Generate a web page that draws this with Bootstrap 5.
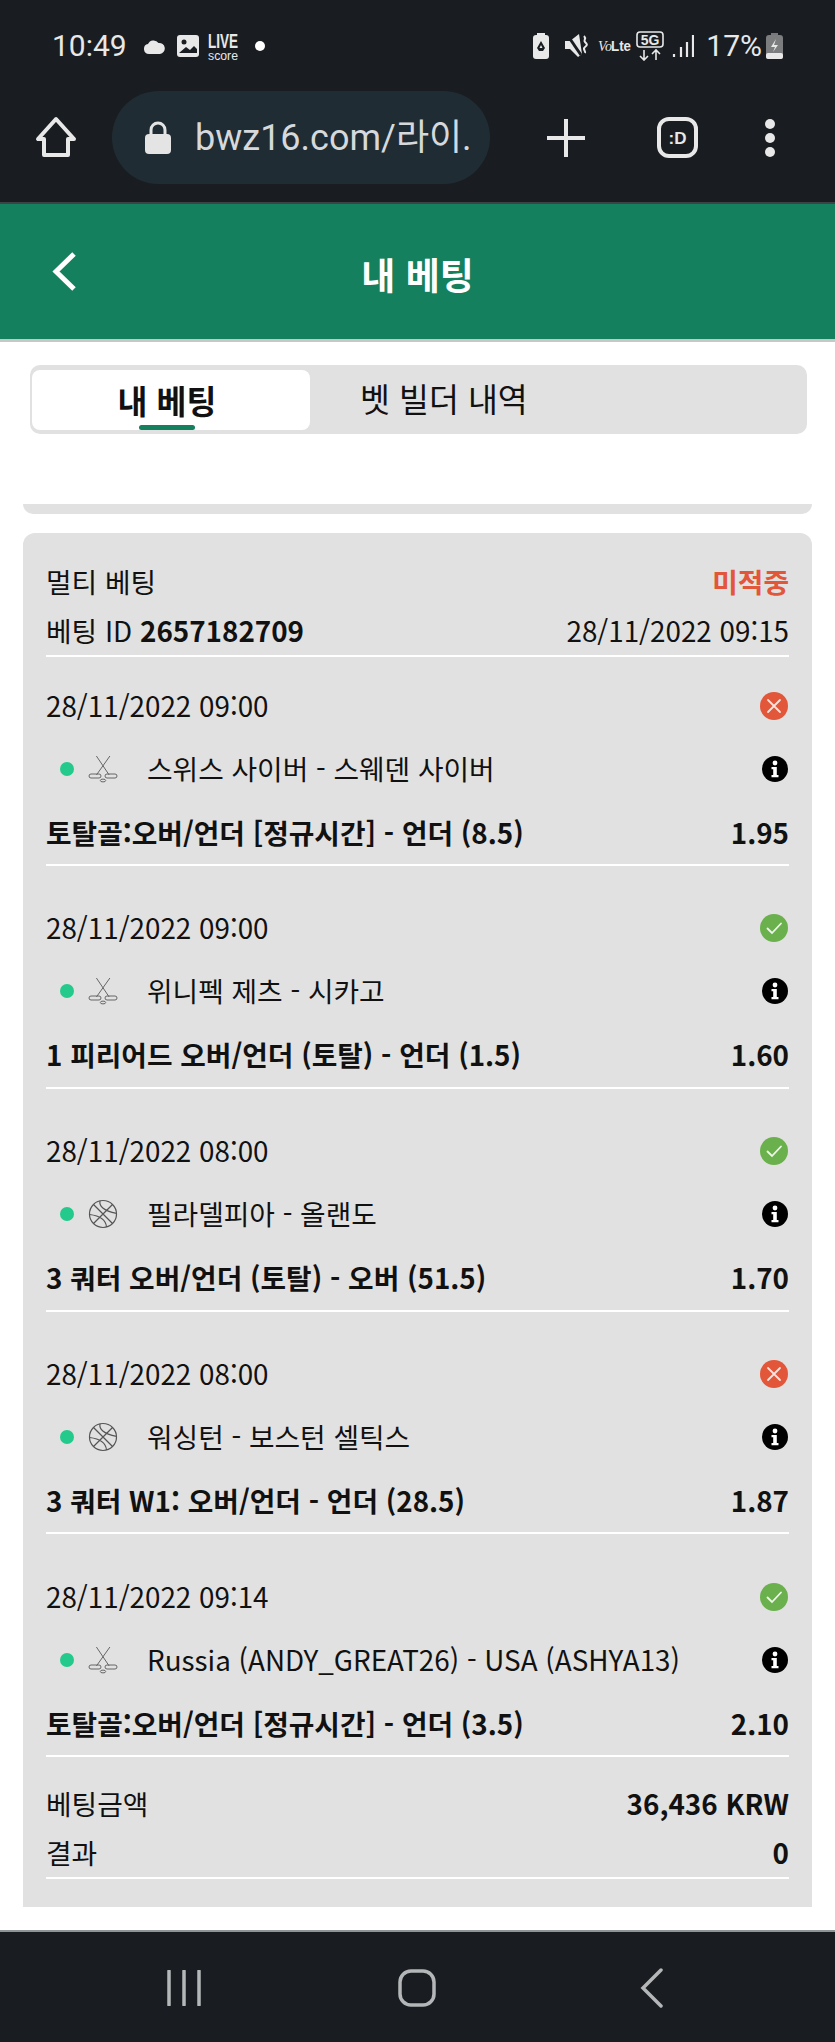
<!DOCTYPE html>
<html lang="ko">
<head>
    <meta charset="UTF-8">
    <title>내 베팅</title>
    <meta name="viewport" content="width=device-width, initial-scale=1">
    <link href="https://cdn.jsdelivr.net/npm/bootstrap@5.3.0/dist/css/bootstrap.min.css" rel="stylesheet">
    <style>
        body {
            width: 835px;
            height: 2042px;
            overflow: hidden;
            background: #fff;
            color: #111;
            font-family: "Noto Sans CJK KR", "Noto Sans", sans-serif;
            font-size: 27.800px;
        }

        .phone-top {
            height: 204px;
            background: #191d21;
            border-bottom: 2px solid #3c4246;
        }

        .status-row {
            height: 91px;
            padding: 0 52px;
            color: #e8e8e8;
            font-family: Roboto, "Liberation Sans", sans-serif;
            font-size: 30px;
        }

        .browser-row {
            height: 93px;
        }

        .url-pill {
            width: 378px;
            height: 93px;
            padding-left: 33px;
            margin-left: 112px;
            margin-right: 57px;
            background: #202c33;
            border-radius: 47px;
            color: #d6d9db;
            font-family: Roboto, "Noto Sans CJK KR", sans-serif;
            font-size: 36px;
            white-space: nowrap;
            overflow: hidden;
        }

        .app-header {
            height: 138px;
            padding-top: 6px;
            background: #15805d;
            border-bottom: 3px solid #c6c8c7;
            color: #fff;
            font-size: 37px;
            font-weight: 700;
        }

        .app-header svg {
            left: 50px;
            top: 46px;
        }

        .tab-track {
            height: 69px;
            margin: 23px 28px 0 30px;
            padding: 5px 2px 4px;
            background: #e1e1e1;
            border-radius: 10px;
            font-size: 32.500px;
        }

        .tab-on {
            width: 278px;
            padding-right: 8px;
            background: #fff;
            border-radius: 8px;
            font-weight: 700;
        }

        .tab-on::after {
            content: "";
            position: absolute;
            left: 107px;
            bottom: 0;
            width: 56px;
            height: 5px;
            background: #15805d;
            border-radius: 3px;
        }

        .tab-off {
            padding-left: 50px;
        }

        .prev-card {
            height: 10px;
            margin: 70px 23px 0;
            background: #e1e1e1;
            border-radius: 0 0 10px 10px;
        }

        .bet-card {
            margin: 19px 23px 0;
            padding: 24px 23px 28px;
            background: #e1e1e1;
            border-radius: 12px 12px 0 0;
        }

        .bet-line {
            height: 49px;
        }

        .bet-line.rule-under {
            height: 51px;
        }

        .rule-under {
            border-bottom: 2px solid #fff;
        }

        .lost-text {
            color: #e2563a;
            font-weight: 700;
        }

        .leg-block {
            padding-top: 17px;
        }

        .leg-block + .leg-block {
            margin-top: 13.750px;
        }

        .leg-date {
            height: 64px;
            padding-bottom: 1px;
        }

        .leg-match,
        .leg-market {
            height: 63px;
        }

        .leg-match {
            padding-bottom: 2px;
        }

        .leg-market {
            font-weight: 700;
        }

        .state-icon {
            margin-right: 1px;
        }

        .live-dot {
            width: 14px;
            height: 14px;
            margin: 0 14px;
            background: #24c98c;
            border-radius: 50%;
        }

        .sport-icon {
            margin-right: 29px;
        }

        .bet-totals {
            margin-top: 22px;
        }

        .phone-bottom {
            height: 112px;
            margin-top: 23px;
            background: #191d21;
            border-top: 2px solid #8f9496;
        }
    </style>
</head>
<body>
    <!-- shared icons -->
    <svg width="0" height="0" class="d-block">
        <symbol id="ic-lost" viewBox="0 0 28 28">
            <circle cx="14" cy="14" r="14" fill="#e2563a"/>
            <path d="M8 8l12 12M20 8L8 20" stroke="#f6e3dd" stroke-width="1.800" stroke-linecap="round"/>
        </symbol>
        <symbol id="ic-won" viewBox="0 0 28 28">
            <circle cx="14" cy="14" r="14" fill="#6ab04c"/>
            <path d="M7.500 14.500l4.500 4.500 9-9.500" fill="none" stroke="#eef6e9" stroke-width="1.800" stroke-linecap="round"/>
        </symbol>
        <symbol id="ic-info" viewBox="0 0 26 26">
            <circle cx="13" cy="13" r="13" fill="#000"/>
            <circle cx="13" cy="7" r="2.400" fill="#fff"/>
            <path d="M9.500 11h5.300v8h1.700v2.200h-7V19h1.700v-5.800H9.500z" fill="#fff"/>
        </symbol>
        <symbol id="ic-hockey" viewBox="0 0 30 30">
            <g fill="none" stroke="#666" stroke-width="1">
                <path d="M8.400 2L21.200 21M21.900 2L8.400 21"/>
                <rect x="1" y="20" width="12" height="4" rx="2"/>
                <rect x="17" y="20" width="12" height="4" rx="2"/>
                <ellipse cx="15" cy="26.500" rx="2.700" ry="1.400"/>
            </g>
        </symbol>
        <symbol id="ic-ball" viewBox="0 0 30 30">
            <g fill="none" stroke="#555" stroke-width="1.200">
                <circle cx="15" cy="15" r="13.500"/>
                <path d="M5.500 5.500l19 19M24.500 5.500l-19 19M12 1.800c-1 5 3 10 16.500 12.500M1.600 15.500C14 17 18 22 18.500 28"/>
            </g>
        </symbol>
    </svg>

    <div class="phone-top">
        <div class="status-row d-flex align-items-center">
            <span>10:49</span>
            <svg class="ms-3" width="22" height="16" viewBox="0 0 22 16"><path d="M6 16a5 5 0 0 1-1-9.900A6 6 0 0 1 15.500 5 5.500 5.500 0 0 1 17 16z" fill="#e8e8e8"/></svg>
            <svg class="ms-2" width="26" height="22" viewBox="0 0 26 22"><rect x="4" y="0" width="22" height="22" rx="3" fill="#e8e8e8"/><circle cx="11" cy="7" r="2.500" fill="#191d21"/><path d="M6 18l7-6 4 3 4-4 3 3v4H6z" fill="#191d21"/></svg>
            <svg class="ms-2" width="32" height="36" viewBox="0 0 32 36">
                <text x="1" y="12.500" transform="scale(1 1.600)" textLength="30" lengthAdjust="spacingAndGlyphs" font-family="Liberation Sans" font-size="12.500" font-weight="700" fill="#e8e8e8">LIVE</text>
                <text x="1" y="32" textLength="30" lengthAdjust="spacingAndGlyphs" font-family="Liberation Sans" font-size="12" fill="#e8e8e8">score</text>
            </svg>
            <span class="rounded-circle bg-white ms-3" style="width:10px;height:10px"></span>
            <div class="ms-auto d-flex align-items-center">
                <svg width="16" height="26" viewBox="0 0 16 26"><rect x="4" y="0" width="8" height="3" fill="#e8e8e8"/><rect x="0" y="2" width="16" height="24" rx="3" fill="#e8e8e8"/><path d="M8 8l4 7-2 3H6l-2-3zM8 12l-1.500 3h3z" fill="#191d21" fill-rule="evenodd"/></svg>
                <svg class="ms-3" width="25" height="25" viewBox="0 0 25 25"><path d="M0 8h5l9-7 3 20-4 3-8-8H0z" fill="#e8e8e8"/><path d="M3 3l13 19" stroke="#191d21" stroke-width="3"/><path d="M19 3c3 3-1 4 1 6s3 3 0 5 1 4 0 6" fill="none" stroke="#e8e8e8" stroke-width="2"/></svg>
                <svg class="ms-2" width="34" height="18" viewBox="0 0 34 18"><text x="0" y="14" font-family="Liberation Serif" font-size="14" font-style="italic" fill="#e8e8e8">Vo</text><text x="13" y="14" textLength="20" lengthAdjust="spacingAndGlyphs" font-family="Liberation Sans" font-size="14" font-weight="700" fill="#e8e8e8">Lte</text></svg>
                <svg class="ms-1" width="28" height="30" viewBox="0 0 28 30"><rect x="1" y="1" width="26" height="15" rx="3" fill="none" stroke="#e8e8e8" stroke-width="1.600"/><text x="14" y="14" text-anchor="middle" font-family="Liberation Sans" font-size="14" font-weight="700" fill="#e8e8e8">5G</text><path d="M8 19v10M4 25l4 4 4-4M20 29V19M16 23l4-4 4 4" fill="none" stroke="#e8e8e8" stroke-width="1.600"/></svg>
                <svg class="ms-2" width="22" height="24" viewBox="0 0 22 24"><path d="M2 20v3M9 13v10M15 8v15M21 1v22" stroke="#e8e8e8" stroke-width="2.200"/></svg>
                <span class="ms-2 ps-1 lh-1">17%</span>
                <svg class="ms-1" width="17" height="26" viewBox="0 0 17 26"><rect x="5" y="0" width="7" height="3" fill="#777"/><rect x="0" y="2" width="17" height="24" rx="3" fill="#7b7d7e"/><rect x="0" y="20" width="17" height="6" rx="2" fill="#e8e8e8"/><path d="M10 6l-5 8h4l-2 5 5-7H8z" fill="#e8e8e8"/></svg>
            </div>
        </div>
        <div class="browser-row d-flex align-items-center position-relative">
            <svg class="position-absolute" style="left:35px;top:25px" width="42" height="42" viewBox="0 0 42 42"><path d="M21 3L3 23h6v16h24V23h6z" fill="none" stroke="#e8e8e8" stroke-width="4" stroke-linejoin="round"/></svg>
            <div class="url-pill d-flex align-items-center">
                <svg class="flex-shrink-0 me-4" width="26" height="33" viewBox="0 0 26 33"><path d="M6 14V9a7 7 0 0 1 14 0v5" fill="none" stroke="#e4e4e4" stroke-width="3"/><rect x="0" y="13" width="26" height="20" rx="4" fill="#e4e4e4"/></svg>
                <span>bwz16.com/라이.</span>
            </div>
            <svg width="38" height="38" viewBox="0 0 38 38"><path d="M19 0v38M0 19h38" stroke="#e8e8e8" stroke-width="4" stroke-linecap="round"/></svg>
            <svg style="margin-left:72px" width="41" height="41" viewBox="0 0 41 41"><rect x="2" y="2" width="37" height="37" rx="10" fill="none" stroke="#e8e8e8" stroke-width="4"/><text x="20.500" y="27" text-anchor="middle" font-family="Liberation Sans" font-size="17" font-weight="700" fill="#e8e8e8">:D</text></svg>
            <svg style="margin-left:67px" width="10" height="38" viewBox="0 0 10 38"><circle cx="5" cy="5" r="5" fill="#e8e8e8"/><circle cx="5" cy="19" r="5" fill="#e8e8e8"/><circle cx="5" cy="33" r="5" fill="#e8e8e8"/></svg>
        </div>
    </div>

    <div class="app-header position-relative d-flex align-items-center justify-content-center">
        <svg class="position-absolute" width="28" height="44" viewBox="0 0 28 44"><path d="M24 4L6 21.500 24 39" fill="none" stroke="#fff" stroke-width="5"/></svg>
        <span>내 베팅</span>
    </div>

    <div class="tab-track d-flex">
        <div class="tab-on position-relative d-flex align-items-center justify-content-center">내 베팅</div>
        <div class="tab-off d-flex align-items-center pb-1">벳 빌더 내역</div>
    </div>

    <div class="prev-card"></div>

    <div class="bet-card">
        <div class="bet-line d-flex justify-content-between align-items-center">
            <span>멀티 베팅</span>
            <span class="lost-text">미적중</span>
        </div>
        <div class="bet-line rule-under d-flex justify-content-between align-items-center">
            <span>베팅 ID <b>2657182709</b></span>
            <span>28/11/2022 09:15</span>
        </div>

        <div class="leg-block rule-under">
            <div class="leg-date d-flex justify-content-between align-items-center">
                <span>28/11/2022 09:00</span>
                <svg class="state-icon" width="28" height="28"><use href="#ic-lost"/></svg>
            </div>
            <div class="leg-match d-flex align-items-center">
                <span class="live-dot"></span>
                <svg class="sport-icon" width="30" height="30"><use href="#ic-hockey"/></svg>
                <span>스위스 사이버 - 스웨덴 사이버</span>
                <svg class="state-icon ms-auto" width="26" height="26"><use href="#ic-info"/></svg>
            </div>
            <div class="leg-market d-flex justify-content-between align-items-center">
                <span>토탈골:오버/언더 [정규시간] - 언더 (8.5)</span>
                <span>1.95</span>
            </div>
        </div>

        <div class="leg-block rule-under">
            <div class="leg-date d-flex justify-content-between align-items-center">
                <span>28/11/2022 09:00</span>
                <svg class="state-icon" width="28" height="28"><use href="#ic-won"/></svg>
            </div>
            <div class="leg-match d-flex align-items-center">
                <span class="live-dot"></span>
                <svg class="sport-icon" width="30" height="30"><use href="#ic-hockey"/></svg>
                <span>위니펙 제츠 - 시카고</span>
                <svg class="state-icon ms-auto" width="26" height="26"><use href="#ic-info"/></svg>
            </div>
            <div class="leg-market d-flex justify-content-between align-items-center">
                <span>1 피리어드 오버/언더 (토탈) - 언더 (1.5)</span>
                <span>1.60</span>
            </div>
        </div>

        <div class="leg-block rule-under">
            <div class="leg-date d-flex justify-content-between align-items-center">
                <span>28/11/2022 08:00</span>
                <svg class="state-icon" width="28" height="28"><use href="#ic-won"/></svg>
            </div>
            <div class="leg-match d-flex align-items-center">
                <span class="live-dot"></span>
                <svg class="sport-icon" width="30" height="30"><use href="#ic-ball"/></svg>
                <span>필라델피아 - 올랜도</span>
                <svg class="state-icon ms-auto" width="26" height="26"><use href="#ic-info"/></svg>
            </div>
            <div class="leg-market d-flex justify-content-between align-items-center">
                <span>3 쿼터 오버/언더 (토탈) - 오버 (51.5)</span>
                <span>1.70</span>
            </div>
        </div>

        <div class="leg-block rule-under">
            <div class="leg-date d-flex justify-content-between align-items-center">
                <span>28/11/2022 08:00</span>
                <svg class="state-icon" width="28" height="28"><use href="#ic-lost"/></svg>
            </div>
            <div class="leg-match d-flex align-items-center">
                <span class="live-dot"></span>
                <svg class="sport-icon" width="30" height="30"><use href="#ic-ball"/></svg>
                <span>워싱턴 - 보스턴 셀틱스</span>
                <svg class="state-icon ms-auto" width="26" height="26"><use href="#ic-info"/></svg>
            </div>
            <div class="leg-market d-flex justify-content-between align-items-center">
                <span>3 쿼터 W1: 오버/언더 - 언더 (28.5)</span>
                <span>1.87</span>
            </div>
        </div>

        <div class="leg-block rule-under">
            <div class="leg-date d-flex justify-content-between align-items-center">
                <span>28/11/2022 09:14</span>
                <svg class="state-icon" width="28" height="28"><use href="#ic-won"/></svg>
            </div>
            <div class="leg-match d-flex align-items-center">
                <span class="live-dot"></span>
                <svg class="sport-icon" width="30" height="30"><use href="#ic-hockey"/></svg>
                <span>Russia (ANDY_GREAT26) - USA (ASHYA13)</span>
                <svg class="state-icon ms-auto" width="26" height="26"><use href="#ic-info"/></svg>
            </div>
            <div class="leg-market d-flex justify-content-between align-items-center">
                <span>토탈골:오버/언더 [정규시간] - 언더 (3.5)</span>
                <span>2.10</span>
            </div>
        </div>

        <div class="bet-totals rule-under">
            <div class="bet-line d-flex justify-content-between align-items-center">
                <span>베팅금액</span>
                <b>36,436 KRW</b>
            </div>
            <div class="bet-line d-flex justify-content-between align-items-center">
                <span>결과</span>
                <b>0</b>
            </div>
        </div>
    </div>

    <div class="phone-bottom d-flex align-items-center justify-content-center position-relative">
        <svg class="position-absolute" style="left:167px;top:38px" width="34" height="36" viewBox="0 0 34 36"><path d="M2 1v34M17 1v34M32 1v34" stroke="#b4b6b7" stroke-width="3.500" stroke-linecap="round"/></svg>
        <svg class="position-absolute" style="left:398px;top:37px" width="38" height="38" viewBox="0 0 38 38"><rect x="2" y="2" width="34" height="34" rx="11" fill="none" stroke="#b4b6b7" stroke-width="3.500"/></svg>
        <svg class="position-absolute" style="left:640px;top:36px" width="24" height="40" viewBox="0 0 24 40"><path d="M21 2L3 20l18 18" fill="none" stroke="#b4b6b7" stroke-width="3.500" stroke-linecap="round"/></svg>
    </div>
</body>
</html>
